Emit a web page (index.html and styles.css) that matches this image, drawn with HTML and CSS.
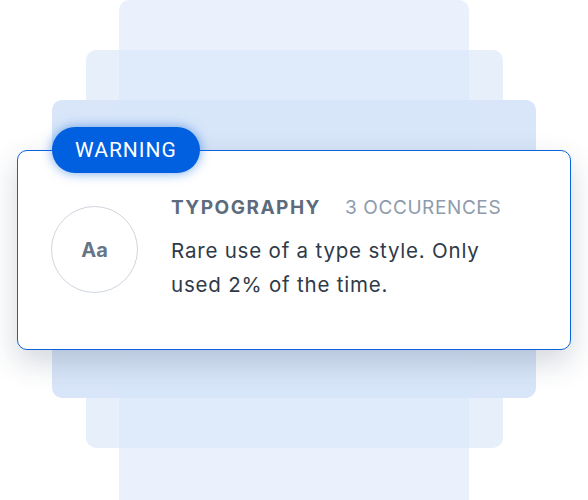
FILE: index.html
```html
<!DOCTYPE html>
<html lang="en">
<head>
    <meta charset="UTF-8">
    <meta name="viewport" content="width=device-width, initial-scale=1.0">
    <title>Style Warning</title>
    <link rel="stylesheet" href="styles.css">
</head>
<body>
    <div class="stage">
        <div class="layer layer-back"></div>
        <div class="layer layer-mid"></div>
        <div class="layer layer-front"></div>

        <div class="card">
            <span class="badge">WARNING</span>
            <div class="icon-circle">Aa</div>
            <div class="card-body">
                <div class="card-head">
                    <span class="category">TYPOGRAPHY</span>
                    <span class="count">3 OCCURENCES</span>
                </div>
                <p class="message">Rare use of a type style. Only used 2% of the time.</p>
            </div>
        </div>
    </div>
</body>
</html>
```

FILE: styles.css
```css
body {
    margin: 0;
    font-family: Inter, "Noto Sans", sans-serif;
    background-color: white;
}
.stage {
    width: 588px;
    height: 500px;
    display: grid;
    overflow: hidden;
}
.stage > * {
    grid-area: 1 / 1;
    justify-self: center;
    align-self: start;
}
.layer {
    border-radius: 10px;
    background-color: rgb(216, 229, 249);
}
.layer-back {
    width: 350px;
    height: 510px;
    opacity: 0.54;
}
.layer-mid {
    width: 417px;
    height: 398px;
    margin-top: 50px;
    opacity: 0.62;
}
.layer-front {
    width: 484px;
    height: 298px;
    margin-top: 100px;
    opacity: 0.97;
}
.card {
    position: relative;
    box-sizing: border-box;
    width: 554px;
    height: 200px;
    margin-top: 150px;
    padding: 55px 30px 0 33px;
    display: flex;
    gap: 33px;
    align-items: flex-start;
    background-color: white;
    border: 1.5px solid #0a63dd;
    border-radius: 10px;
    box-shadow: 0 12px 30px rgba(30, 50, 80, 0.2);
}
.badge {
    position: absolute;
    left: 34px;
    top: -24px;
    height: 46px;
    padding: 0 23px;
    display: flex;
    align-items: center;
    border-radius: 23px;
    background-color: #0060df;
    color: white;
    font-family: Roboto, "Noto Sans", sans-serif;
    font-size: 21px;
    letter-spacing: 1px;
    box-shadow: 0 0 12px rgba(0, 96, 223, 0.55);
}
.icon-circle {
    flex: none;
    box-sizing: border-box;
    width: 87px;
    height: 87px;
    border: 1.5px solid #cfd6de;
    border-radius: 50%;
    display: flex;
    align-items: center;
    justify-content: center;
    color: #667587;
    font-size: 20px;
    font-weight: 700;
}
.card-head {
    display: flex;
    gap: 24px;
    margin-top: -9px;
    font-size: 19px;
    line-height: 22px;
}
.category {
    font-weight: 700;
    color: #5d6b7c;
    letter-spacing: 1.5px;
}
.count {
    color: #8e9bab;
    letter-spacing: 0.6px;
}
.message {
    margin: 15px 0 0;
    font-size: 20.5px;
    line-height: 34px;
    letter-spacing: 0.8px;
    color: #2f3a48;
    max-width: 340px;
}
```
